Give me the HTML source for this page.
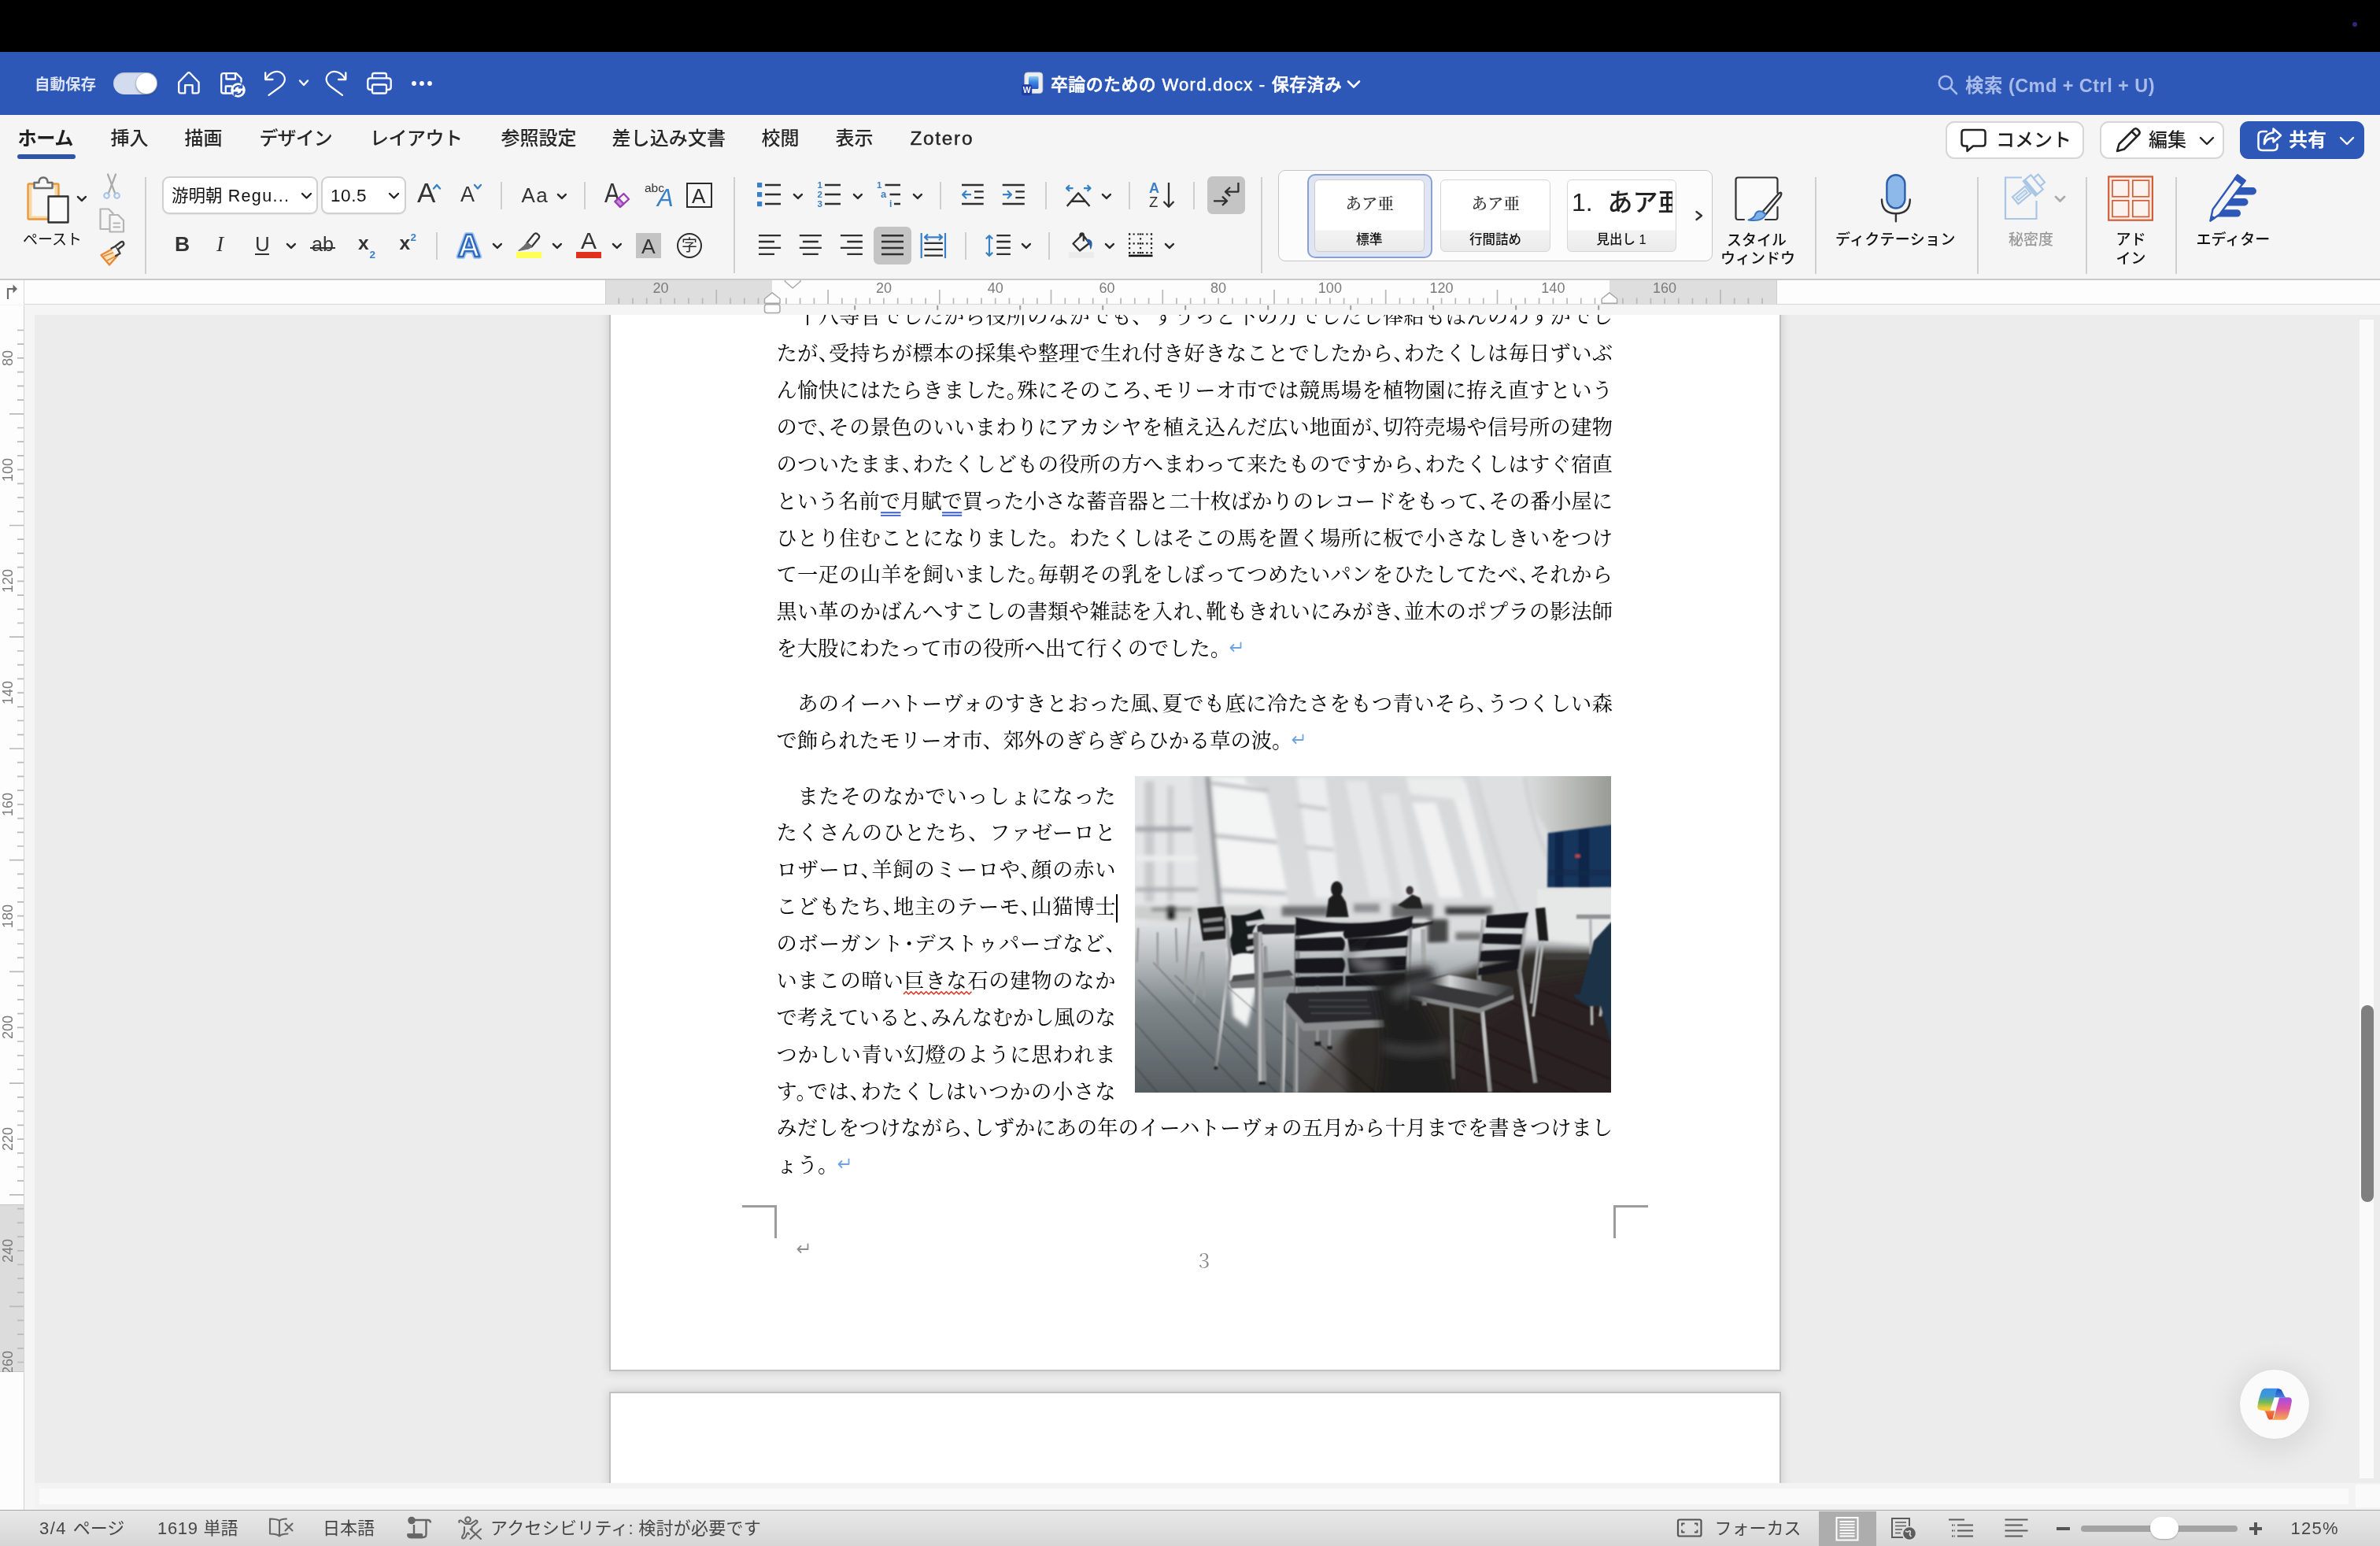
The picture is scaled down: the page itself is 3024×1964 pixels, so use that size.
<!DOCTYPE html>
<html lang="ja">
<head>
<meta charset="utf-8">
<title>卒論のための Word.docx</title>
<style>
*{box-sizing:border-box;margin:0;padding:0}
html{width:3024px;height:1964px;overflow:hidden;background:#ececec}
body{width:3024px;height:1964px;overflow:hidden;background:transparent;will-change:transform}
body{position:relative;font-family:"Liberation Sans","Noto Sans CJK JP",sans-serif;color:#222;-webkit-font-smoothing:antialiased}
.abs{position:absolute}
svg{position:absolute;overflow:visible}
.t{position:absolute;white-space:nowrap;line-height:1;}
/* top */
#menubar{left:0;top:0;width:3024px;height:66px;background:#000}
#titlebar{left:0;top:66px;width:3024px;height:80px;background:#2d58b8}
#ribbon{left:0;top:146px;width:3024px;height:209px;background:#f5f5f5}
#ribbonline{left:0;top:354px;width:3024px;height:2px;background:#c9c9c9}
.tab{position:absolute;top:164.300px;font-size:24px;font-weight:500;color:#262626;white-space:nowrap;line-height:1;letter-spacing:0}
.sep{position:absolute;width:2px;background:#cfcfcf}
.chev{position:absolute}
.lbl{position:absolute;font-size:19px;color:#1a1a1a;white-space:nowrap;line-height:1;text-align:center}
.rl{font-size:18px;color:#7a7a7a;line-height:18px}
/* doc */
#docbg{left:0;top:356px;width:3024px;height:1562px;background:#ececec}
.page{position:absolute;background:#fff}
.ln{position:absolute;left:986.500px;width:1062.500px;height:46.875px;line-height:46.875px;font-family:"Noto Serif CJK JP","Noto Serif CJK SC",serif;font-size:26.25px;color:#000;white-space:nowrap;text-align:justify;text-align-last:justify;text-justify:inter-character;font-weight:400}
.ln.nj{text-align:left;text-align-last:left}
.ln.c{width:431px}
.ln i{font-style:normal;margin-right:-.5em}
.ln i.m{margin-left:-.25em;margin-right:-.25em}
.pm{color:#6ea0dc;font-family:"DejaVu Sans",sans-serif;font-size:20px;margin-left:6px}
/* status */
#status{left:0;top:1918px;width:3024px;height:46px;background:linear-gradient(#e8e8e8,#d6d6d6);border-top:1.500px solid #a6a6a6}
.st{position:absolute;top:1931px;font-size:22px;color:#464646;white-space:nowrap;line-height:1}
</style>
</head>
<body>
<div class="abs" id="menubar"></div>
<div class="abs" style="left:2989px;top:28px;width:6px;height:6px;border-radius:3px;background:#2a2a78"></div>
<!-- document area -->
<div class="abs" id="docbg"></div>
<div class="page" style="left:776px;top:300px;width:1484.500px;height:1440px;box-shadow:0 0 0 2px #c1c1c1,0 0 11px 3px rgba(0,0,0,.13)"></div>
<div class="page" style="left:776px;top:1770px;width:1484.500px;height:300px;box-shadow:0 0 0 2px #c1c1c1,0 0 11px 3px rgba(0,0,0,.13)"></div>
<div class="ln " style="top:377.29px">　十八等官でしたから役所のなかでも、ずうっと下の方でしたし俸給もほんのわずかでし</div>
<div class="ln " style="top:424.16px">たが<i>、</i>受持ちが標本の採集や整理で生れ付き好きなことでしたから<i>、</i>わたくしは毎日ずいぶ</div>
<div class="ln " style="top:471.04px">ん愉快にはたらきました<i>。</i>殊にそのころ<i>、</i>モリーオ市では競馬場を植物園に拵え直すという</div>
<div class="ln " style="top:517.91px">ので<i>、</i>その景色のいいまわりにアカシヤを植え込んだ広い地面が<i>、</i>切符売場や信号所の建物</div>
<div class="ln " style="top:564.79px">のついたまま<i>、</i>わたくしどもの役所の方へまわって来たものですから<i>、</i>わたくしはすぐ宿直</div>
<div class="ln " style="top:611.66px;letter-spacing:-.12px">という名前で月賦で買った小さな蓄音器と二十枚ばかりのレコードをもって<i>、</i>その番小屋に</div>
<div class="ln " style="top:658.54px">ひとり住むことになりました。わたくしはそこの馬を置く場所に板で小さなしきいをつけ</div>
<div class="ln " style="top:705.41px">て一疋の山羊を飼いました<i>。</i>毎朝その乳をしぼってつめたいパンをひたしてたべ<i>、</i>それから</div>
<div class="ln " style="top:752.29px">黒い革のかばんへすこしの書類や雑誌を入れ<i>、</i>靴もきれいにみがき<i>、</i>並木のポプラの影法師</div>
<div class="ln nj" style="top:799.16px">を大股にわたって市の役所へ出て行くのでした。</div>
<div class="ln " style="top:869.44px">　あのイーハトーヴォのすきとおった風<i>、</i>夏でも底に冷たさをもつ青いそら<i>、</i>うつくしい森</div>
<div class="ln nj" style="top:916.31px">で飾られたモリーオ市、郊外のぎらぎらひかる草の波。</div>
<div class="ln c" style="top:986.59px">　またそのなかでいっしょになった</div>
<div class="ln c" style="top:1033.46px">たくさんのひとたち、ファゼーロと</div>
<div class="ln c" style="top:1080.34px">ロザーロ<i>、</i>羊飼のミーロや<i>、</i>顔の赤い</div>
<div class="ln c" style="top:1127.21px">こどもたち<i>、</i>地主のテーモ<i>、</i>山猫博士</div>
<div class="ln c" style="top:1174.09px">のボーガント<i class="m">・</i>デストゥパーゴなど<i>、</i></div>
<div class="ln c" style="top:1220.96px">いまこの暗い巨きな石の建物のなか</div>
<div class="ln c" style="top:1267.84px;letter-spacing:-.3px">で考えていると<i>、</i>みんなむかし風のな</div>
<div class="ln c" style="top:1314.71px">つかしい青い幻燈のように思われま</div>
<div class="ln c" style="top:1361.59px">す<i>。</i>では<i>、</i>わたくしはいつかの小さな</div>
<div class="ln " style="top:1408.46px;letter-spacing:-.12px">みだしをつけながら<i>、</i>しずかにあの年のイーハトーヴォの五月から十月までを書きつけまし</div>
<div class="ln nj" style="top:1455.34px">ょう。</div>
<svg width="18" height="14" style="left:1561px;top:814.6px" viewBox="0 0 18 14" fill="none" stroke="#6fa3e0" stroke-width="1.800" stroke-linecap="round" stroke-linejoin="round"><path d="M15.500 1.500 V8 H2.500 M6.500 4 L2.500 8 L6.500 12"/></svg>
<svg width="18" height="14" style="left:1640px;top:931.8px" viewBox="0 0 18 14" fill="none" stroke="#6fa3e0" stroke-width="1.800" stroke-linecap="round" stroke-linejoin="round"><path d="M15.500 1.500 V8 H2.500 M6.500 4 L2.500 8 L6.500 12"/></svg>
<svg width="18" height="14" style="left:1063px;top:1470.8px" viewBox="0 0 18 14" fill="none" stroke="#6fa3e0" stroke-width="1.800" stroke-linecap="round" stroke-linejoin="round"><path d="M15.500 1.500 V8 H2.500 M6.500 4 L2.500 8 L6.500 12"/></svg>
<svg width="18" height="14" style="left:1011px;top:1578.5px" viewBox="0 0 18 14" fill="none" stroke="#8e8e8e" stroke-width="1.800" stroke-linecap="round" stroke-linejoin="round"><path d="M15.500 1.500 V8 H2.500 M6.500 4 L2.500 8 L6.500 12"/></svg>
<svg width="25.5" height="8" style="left:1119px;top:649px" viewBox="0 0 25.5 8" fill="none" stroke="#3a5fc6" stroke-width="1.850"><path d="M0 2.250 H25.5 M0 5.800 H25.5"/></svg>
<svg width="25.2" height="8" style="left:1197.3px;top:649px" viewBox="0 0 25.2 8" fill="none" stroke="#3a5fc6" stroke-width="1.850"><path d="M0 2.250 H25.2 M0 5.800 H25.2"/></svg>
<svg width="100" height="10" style="left:1140px;top:1255px" viewBox="1140 1255 100 10" fill="none" stroke="#e0301e" stroke-width="1.500" stroke-linejoin="round"><path d="M1148.0 1263L1151.2 1259.8L1154.4 1263.0L1157.6 1259.8L1160.8 1263.0L1164.0 1259.8L1167.2 1263.0L1170.4 1259.8L1173.6 1263.0L1176.8 1259.8L1180.0 1263.0L1183.2 1259.8L1186.4 1263.0L1189.6 1259.8L1192.8 1263.0L1196.0 1259.8L1199.2 1263.0L1202.4 1259.8L1205.6 1263.0L1208.8 1259.8L1212.0 1263.0L1215.2 1259.8L1218.4 1263.0L1221.6 1259.8L1224.8 1263.0L1228.0 1259.8L1231.2 1263.0L1234.4 1259.8"/></svg>
<div class="abs" style="left:1417.500px;top:1136px;width:2px;height:36px;background:#000"></div>
<div class="abs" style="left:942.500px;top:1530.500px;width:44.500px;height:42.500px;border-top:3px solid #9c9c9c;border-right:3px solid #9c9c9c"></div>
<div class="abs" style="left:2050px;top:1530.500px;width:44px;height:42.500px;border-top:3px solid #9c9c9c;border-left:3px solid #9c9c9c"></div>
<div class="t" id="pageno" style="left:1500px;top:1585px;width:60px;text-align:center;font-family:'Noto Serif CJK JP','Noto Serif CJK SC',serif;font-size:26.250px;color:#8a8a8a;line-height:30px">3</div>
<svg width="604.300" height="402.100" style="left:1442.300px;top:986.100px;overflow:hidden" viewBox="45 37 2203 1466" preserveAspectRatio="none">
<defs>
<linearGradient id="pfl" x1="0" y1="0" x2="1" y2="0"><stop offset="0" stop-color="#8d8b8a"/><stop offset=".22" stop-color="#6a6665"/><stop offset=".42" stop-color="#3a3432"/><stop offset="1" stop-color="#2a2422"/></linearGradient>
<linearGradient id="pft" x1="0" y1="0" x2="0" y2="1"><stop offset="0" stop-color="#e2e3e3"/><stop offset=".25" stop-color="#b9b9b9" stop-opacity=".75"/><stop offset=".55" stop-color="#777" stop-opacity="0"/></linearGradient>
<linearGradient id="pfv" x1="0" y1="700" x2="0" y2="1503" gradientUnits="userSpaceOnUse"><stop offset="0" stop-color="#e3e6e7"/><stop offset=".22" stop-color="#b9bec1"/><stop offset=".5" stop-color="#7f868a"/><stop offset="1" stop-color="#565c60"/></linearGradient>
<linearGradient id="pseat" x1="0" y1="0" x2="1" y2="0"><stop offset="0" stop-color="#2c2d2e"/><stop offset=".3" stop-color="#d4d5d6"/><stop offset=".55" stop-color="#8a8c8d"/><stop offset="1" stop-color="#333536"/></linearGradient>
<linearGradient id="pwall" x1="0" y1="0" x2="1" y2="0"><stop offset="0" stop-color="#8c8e88" stop-opacity="0"/><stop offset="1" stop-color="#868880" stop-opacity=".95"/></linearGradient>
<linearGradient id="pbg" x1="0" y1="0" x2="0" y2="1"><stop offset="0" stop-color="#d6d8d9"/><stop offset="1" stop-color="#dfe0e1"/></linearGradient>
<linearGradient id="psil" x1="0" y1="0" x2="1" y2="0"><stop offset="0" stop-color="#7d7f80"/><stop offset=".5" stop-color="#c9cacb"/><stop offset="1" stop-color="#8a8c8d"/></linearGradient>
<filter id="pb1" x="-5%" y="-5%" width="110%" height="110%"><feGaussianBlur stdDeviation="3.500"/></filter>
<filter id="pb2" x="-20%" y="-20%" width="140%" height="140%"><feGaussianBlur stdDeviation="9"/></filter>
<filter id="pb3" x="-30%" y="-30%" width="160%" height="160%"><feGaussianBlur stdDeviation="22"/></filter>
</defs>
<rect x="45" y="37" width="2203" height="1466" fill="url(#pbg)"/>
<g filter="url(#pb2)">
<!-- left window with trees -->
<polygon points="-30,-20 300,-20 340,640 -30,640" fill="#e4e5e6"/>
<rect x="90" y="60" width="45" height="560" fill="#bfc1c2" opacity=".7"/><rect x="195" y="80" width="30" height="540" fill="#c4c5c6" opacity=".7"/>
<rect x="45" y="270" width="265" height="24" fill="#a1a6a8"/><rect x="45" y="405" width="290" height="26" fill="#eceded"/><rect x="45" y="553" width="290" height="18" fill="#a6aaac"/>
<!-- window 1 -->
<polygon points="398,40 555,40 560,70 650,95 705,335 420,305" fill="#f3f4f4"/>
<polygon points="420,322 705,350 748,565 448,548" fill="#f4f4f4"/>
<polygon points="450,578 748,590 755,640 455,640" fill="#ededee"/>
<polygon points="372,37 392,37 448,640 428,640" fill="#8b8f91"/>
<polygon points="400,62 660,98 662,112 402,76" fill="#a9adaf"/><polygon points="420,305 700,335 702,350 422,320" fill="#a9adaf"/><polygon points="445,560 745,575 745,588 447,574" fill="#b1b4b6"/>
<!-- windows 2.. -->
<polygon points="795,40 925,40 965,330 1000,600 880,600 835,330" fill="#ecedee"/>
<polygon points="800,165 935,185 937,198 802,178" fill="#b5b8ba"/><polygon points="835,360 965,372 966,384 837,372" fill="#b5b8ba"/>
<polygon points="1020,60 1120,60 1235,600 1135,600" fill="#e6e7e8"/>
<polygon points="1185,120 1265,120 1370,600 1290,600" fill="#e4e5e6"/>
<polygon points="1330,160 1440,160 1565,600 1455,600" fill="#f1f1f2"/>
<polygon points="1500,60 1575,60 1715,600 1655,600" fill="#efeff0"/>
<polygon points="1300,40 1560,40 1575,150 1320,120" fill="#ebecec"/>
<!-- right wall -->
<polygon points="1610,-20 2330,-20 2330,640 1880,820" fill="#dedfe0"/>
<polygon points="1840,-20 2330,-20 2330,270 1965,305 1900,200" fill="url(#pwall)"/>
<path d="M1850 37 Q1880 250 1960 420" stroke="#b9bbbd" stroke-width="7" fill="none"/>
<path d="M1630 37 Q1700 400 1860 760" stroke="#c6c8c9" stroke-width="6" fill="none"/>
</g>
<!-- bg furniture band -->
<g filter="url(#pb2)" fill="#4a4c4d">
<rect x="45" y="640" width="600" height="60" fill="#c9cacb" opacity=".8"/>
<rect x="190" y="638" width="45" height="62" fill="#222"/><rect x="120" y="648" width="190" height="12" fill="#555"/>
<rect x="725" y="640" width="215" height="46" opacity=".75"/><rect x="1060" y="628" width="120" height="40" opacity=".5"/>
<rect x="1235" y="632" width="190" height="62" opacity=".8"/><rect x="1480" y="640" width="220" height="40" opacity=".8"/>
<rect x="1490" y="655" width="180" height="18" fill="#1d1d1d"/>
<rect x="1400" y="700" width="95" height="120" fill="#2c2c2c" opacity=".85"/>
<rect x="1530" y="760" width="120" height="40" fill="#777"/>
</g>
<!-- people -->
<g filter="url(#pb1)" fill="#1b1b1c">
<ellipse cx="980" cy="560" rx="27" ry="36"/><polygon points="930,690 942,605 965,585 1000,585 1022,620 1035,690"/>
<ellipse cx="1318" cy="566" rx="17" ry="20" fill="#3a3634"/><polygon points="1262,635 1310,600 1330,585 1365,600 1378,650 1300,650" fill="#202022"/>
</g>
<!-- screen + counter -->
<g filter="url(#pb1)">
<polygon points="1958,300 2300,256 2300,552 1955,552" fill="#17355c"/>
<polygon points="1990,300 2030,295 2030,552 1990,552" fill="#0f2444" opacity=".8"/><polygon points="2100,285 2150,278 2150,552 2100,552" fill="#0f2444" opacity=".8"/><rect x="1960" y="470" width="288" height="30" fill="#122b4d" opacity=".7"/>
<rect x="2085" y="400" width="22" height="14" fill="#c24a4a"/>
<polygon points="1908,562 2300,556 2300,852 1912,852" fill="#e6e7e7"/>
<rect x="1950" y="845" width="215" height="22" fill="#4b4b4b"/>
</g>
<!-- floor -->
<polygon points="-40,690 640,770 1400,810 1880,790 2330,850 2330,1600 -40,1600" fill="url(#pfv)" filter="url(#pb2)"/>
<polygon points="780,1600 1000,1250 1180,1080 1450,985 1870,838 2330,850 2330,1600" fill="#2b2624" opacity=".96" filter="url(#pb3)"/>
<polygon points="1480,1600 1600,1200 1900,1000 2330,940 2330,1600" fill="#2a2422" filter="url(#pb3)"/>
<polygon points="470,800 615,800 612,1000 565,1200 500,1150" fill="#f0f2f2" filter="url(#pb2)"/>
<polygon points="790,1180 1000,1160 1040,1600 800,1600" fill="#6d6b69" opacity=".55" filter="url(#pb3)"/>
<g stroke="#23282b" stroke-width="4" opacity=".5" filter="url(#pb1)"><path d="M45 1180 L330 1503 M60 980 L560 1503 M230 960 L800 1503 M470 1010 L1040 1503 M130 900 L700 1503 M45 1380 L150 1503"/></g>
<g stroke="#15110f" stroke-width="4" opacity=".6" filter="url(#pb1)"><path d="M900 1280 L1160 1503 M1560 1150 L2248 1440 M1500 1250 L2100 1503 M1700 1050 L2248 1270 M1430 1330 L1830 1503 M1850 1000 L2248 1150"/></g>
<!-- far-left chairs -->
<g filter="url(#pb1)">
<g stroke="#9a9c9d" stroke-width="9" fill="none"><path d="M60 740 L55 900 M150 760 L150 930 M235 740 L240 900 M300 690 L275 1025 M355 850 L318 1090 M362 850 L365 1060"/></g>
<path d="M335 650 L455 640 L470 700 L465 790 L360 800 Z" fill="#1d1e1f"/>
<path d="M360 700 L450 690 L452 706 L362 716 Z M362 742 L455 734 L456 750 L364 758 Z" fill="#8d8f90"/>
<polygon points="300,815 480,800 480,830 300,850" fill="#c6c7c8"/>
<!-- left chair -->
<path d="M490 680 Q560 690 625 652 L645 700 Q600 720 590 760 Q600 800 640 815 L590 860 Q530 850 500 870 L480 800 Q500 770 495 740 Z" fill="#191a1b"/>
<path d="M560 712 L640 700 L642 716 L566 730 Z M568 772 L600 768 L604 784 L570 790 Z M560 830 L600 822 L603 836 L565 846 Z" fill="#cfd0d1"/>
<g stroke="url(#psil)" stroke-width="15" fill="none" stroke-linecap="round"><path d="M470 700 L485 880 L420 1385"/><path d="M650 830 L655 990"/></g>
<polygon points="480,985 760,958 790,990 790,1010 490,1020" fill="#77797a"/>
<polygon points="500,960 760,935 780,960 490,990" fill="#4a4c4d"/>
<circle cx="420" cy="1388" r="9" fill="#222"/>
<!-- table -->
<polygon points="612,730 700,702 1425,706 1425,722 1330,745 640,770 612,758" fill="#2b2c2d"/>
<polygon points="640,722 705,700 1425,704 1380,716 900,725" fill="#d5d6d7"/>
<path d="M613 760 L635 1460" stroke="url(#psil)" stroke-width="40" fill="none"/>
<rect x="618" y="1450" width="34" height="16" fill="#1a1a1a"/>
<path d="M1380 745 L1385 1100" stroke="#a9abac" stroke-width="22" fill="none"/>
<!-- main chair -->
<g stroke="url(#psil)" stroke-width="24" fill="none"><path d="M797 720 L790 1503"/><path d="M1318 715 L1302 1120"/></g>
<path d="M745 1075 L727 1503" stroke="url(#psil)" stroke-width="20" fill="none"/>
<path d="M892 960 L890 1280 M948 1210 L945 1300" stroke="#8f9192" stroke-width="14" fill="none"/>
<rect x="878" y="1265" width="28" height="20" fill="#1a1a1a"/><rect x="935" y="1285" width="24" height="18" fill="#1a1a1a"/>
<path d="M788 690 Q1060 745 1333 684 L1330 735 Q1300 760 1200 775 L1020 790 Q1000 765 1020 750 L788 778 Z" fill="#18191a"/>
<path d="M786 790 L1000 782 Q1030 800 1010 845 L786 848 Z M1030 790 L1312 775 L1308 830 L1040 850 Z" fill="#18191a"/>
<path d="M786 882 L1005 878 Q1030 900 1008 948 L786 950 Z M1030 880 L1305 870 L1300 935 L1040 950 Z" fill="#18191a"/>
<path d="M786 968 L1010 962 L1010 1008 L786 1012 Z M1020 962 L1298 950 L1294 1005 L1020 1010 Z" fill="#18191a"/>
<polygon points="760,1042 1195,1028 1215,1150 1080,1180 830,1182 742,1082" fill="#2a2c2d"/>
<polygon points="742,1082 830,1182 1200,1165 1205,1200 825,1218 738,1105" fill="#8a8c8d"/>
<g stroke="#4a4c4d" stroke-width="5"><path d="M850 1075 H1120 M850 1105 H1130 M860 1135 H1140"/></g>
<!-- right chair -->
<g stroke="url(#psil)" stroke-width="20" fill="none"><path d="M1660 700 L1638 965 L1690 1500"/><path d="M1858 690 L1826 935 L1900 1458"/></g>
<polygon points="1675,682 1868,668 1852,742 1668,738" fill="#17181a"/><polygon points="1655,765 1842,768 1836,818 1650,812" fill="#17181a"/>
<polygon points="1646,846 1832,838 1826,892 1640,897" fill="#17181a"/><polygon points="1636,925 1826,888 1820,932 1632,962" fill="#17181a"/>
<polygon points="1320,992 1500,955 1795,1012 1800,1050 1640,1112 1322,1050" fill="#37393a"/>
<polygon points="1380,990 1500,958 1795,1012 1720,1055" fill="url(#pseat)"/>
<polygon points="1322,1050 1640,1112 1800,1050 1800,1070 1640,1135 1322,1072" fill="#858788"/>
<path d="M1510 1100 L1520 1440" stroke="#8a8c8d" stroke-width="18" fill="none"/>
<!-- far right -->
<path d="M1900 650 L1945 645 L1960 800 L1915 800 Z" fill="#1c1d1e"/>
<g stroke="#b4b6b7" stroke-width="13" fill="none"><path d="M1935 800 L1890 1150"/><path d="M1915 800 L1880 1090"/><path d="M2155 700 L2162 1190"/><path d="M2225 960 L2200 1150"/></g>
<rect x="2090" y="678" width="158" height="20" fill="#8f9192"/>
<rect x="1945" y="860" width="210" height="28" fill="#3c3c3c"/>
<polygon points="2300,700 2248,715 2170,800 2105,1050 2075,1045 2085,1065 2150,1105 2200,1100 2248,1265 2300,1300" fill="#1e3346"/>
</g>
<!-- blurred foreground chair -->
<g filter="url(#pb3)">
<path d="M1180 760 Q1020 850 1050 915 Q1080 960 1420 915 L1440 1000 L1330 1030 Q1480 1200 1540 1600 L1150 1600 Q1230 1300 1150 1000 Q1020 960 1030 880 Q1050 800 1180 760 Z" fill="#1d1d1f" opacity=".93"/>
<path d="M1060 870 Q1100 930 1200 900" stroke="#cfd0d1" stroke-width="26" fill="none" opacity=".8"/>
<path d="M1250 1060 Q1300 1010 1420 1000" stroke="#9d9fa0" stroke-width="22" fill="none" opacity=".6"/>
<path d="M1200 1290 Q1330 1330 1500 1290" stroke="#77797a" stroke-width="24" fill="none" opacity=".5"/>
</g>
</svg>

<div class="abs" style="left:44px;top:1883.500px;width:2980px;height:35px;background:#f3f3f3"></div>
<div class="abs" style="left:50px;top:1891px;width:2934px;height:19.500px;background:#fafafa"></div>
<div class="abs" style="left:2997.500px;top:406px;width:18.500px;height:1472px;background:#fafafa"></div>
<div class="abs" style="left:3000px;top:1276.500px;width:16px;height:250.500px;border-radius:8px;background:#7f7f7f"></div>
<div class="abs" style="left:2992.500px;top:1886px;width:31.500px;height:28.500px;background:#fafafa"></div>
<div class="abs" style="left:2846px;top:1740px;width:88px;height:88px;border-radius:44px;background:#fbfbfb;box-shadow:0 6px 36px 10px rgba(0,0,0,.085),0 0 0 1px rgba(0,0,0,.02)"></div>
<svg width="48" height="44" style="left:2866px;top:1762px" viewBox="547 500 571 523">
<defs>
<linearGradient id="cp1" x1="0" y1="0" x2="0" y2="1"><stop offset="0" stop-color="#3a8fec"/><stop offset=".35" stop-color="#3f9bd0"/><stop offset=".62" stop-color="#74b957"/><stop offset=".9" stop-color="#f2cb3a"/><stop offset="1" stop-color="#f5c13a"/></linearGradient>
<linearGradient id="cp2" x1="0" y1="0" x2="0" y2="1"><stop offset="0" stop-color="#1d4cc0"/><stop offset="1" stop-color="#3f86dc"/></linearGradient>
<linearGradient id="cp3" x1="0" y1="0" x2="0" y2="1"><stop offset="0" stop-color="#9f50e0"/><stop offset=".18" stop-color="#b94fd0"/><stop offset=".5" stop-color="#e2569a"/><stop offset=".8" stop-color="#f08a66"/><stop offset="1" stop-color="#f7a552"/></linearGradient>
<linearGradient id="cp4" x1="0" y1="0" x2="0" y2="1"><stop offset="0" stop-color="#f07a3c"/><stop offset="1" stop-color="#e2532f"/></linearGradient>
</defs>
<path d="M858 525 Q900 515 935 540 Q960 580 985 640 Q995 655 1010 657 L830 657 Z" fill="url(#cp2)"/>
<path d="M690 522 H900 Q870 525 850 590 L765 858 H700 Q560 860 575 790 Q590 690 625 590 Q645 525 690 522 Z" fill="url(#cp1)"/>
<path d="M700 860 H835 L805 985 Q780 1000 750 992 Q725 975 715 930 Q708 890 680 862 Z" fill="url(#cp4)"/>
<path d="M905 657 H1040 Q1100 655 1092 720 Q1075 830 1045 920 Q1025 990 985 995 H790 Q815 990 830 935 L905 657 Z" fill="url(#cp3)"/>
</svg>

<div class="abs" id="titlebar"></div>
<div class="t" id="autosave" style="left:44px;top:97.500px;font-size:19.5px;font-weight:700;color:#dbe3f5">自動保存</div>
<div class="abs" style="left:144px;top:92px;width:56px;height:28px;border-radius:14px;background:#d3dbee;box-shadow:inset 0 1px 2px rgba(0,0,0,.15)"></div>
<div class="abs" style="left:173px;top:93px;width:26px;height:26px;border-radius:13px;background:#fff;box-shadow:0 1px 3px rgba(0,0,0,.45)"></div>
<svg width="340" height="50" style="left:220px;top:82px" viewBox="220 82 340 50" fill="none" stroke="#fff" stroke-width="2.300" stroke-linecap="round" stroke-linejoin="round">
<!-- home -->
<path d="M227.2 104.5 L238.3 93 Q239.9 91.4 241.5 93 L252.6 104.5 V116 Q252.6 118.3 250.3 118.3 H244.6 V108.2 H235.2 V118.3 H229.5 Q227.2 118.3 227.2 116 Z"/>
<!-- save -->
<path d="M294 118.5 H284 Q281.2 118.5 281.2 115.7 V96 Q281.2 93.2 284 93.2 H300 L306.5 99.5 V104"/>
<path d="M287.5 93.5 V100.5 H299 V93.5"/>
<path d="M286.8 118 V109.5 H294"/>
<circle cx="302.5" cy="114.5" r="9.3" fill="#fff" stroke="none"/>
<path d="M297.6 113 A5.2 5.2 0 0 1 306.6 111 M307.4 116 A5.2 5.2 0 0 1 298.4 118" stroke="#2d58b8" stroke-width="2.2"/>
<path d="M307.3 108 V111.6 H303.7 M297.7 121 V117.4 H301.3" stroke="#2d58b8" stroke-width="2"/>
<!-- undo -->
<path d="M337.2 92.5 V101 H346.5"/>
<path d="M338 100.2 C343 91 353 88.5 358.5 93.5 C364.5 99 362 106 355 111 L341.5 120.8" stroke-width="2.200"/>
<path d="M381 102.5 L386 108 L391 102.5" stroke-width="2.4"/>
<!-- redo -->
<path d="M439.3 92.5 V101 H430"/>
<path d="M438.5 100.2 C433.5 91 423.5 88.5 418 93.5 C412 99 414.500 106 421.5 111 L435 120.8" stroke-width="2.200"/>
<!-- print -->
<path d="M473 99 V95.5 Q473 93 475.5 93 H488.500 Q491 93 491 95.5 V99"/>
<path d="M473 114 H470.5 Q467.3 114 467.3 110.800 V102.500 Q467.3 99.300 470.5 99.300 H493.500 Q496.700 99.300 496.700 102.500 V110.800 Q496.700 114 493.500 114 H491"/>
<rect x="473" y="107.500" width="18" height="11" rx="2"/>
<!-- dots -->
<g fill="#fff" stroke="none"><circle cx="526" cy="106" r="2.900"/><circle cx="536" cy="106" r="2.900"/><circle cx="546" cy="106" r="2.900"/></g>
</svg>
<!-- doc icon -->
<svg width="32" height="34" style="left:1296px;top:90px" viewBox="0 0 32 34">
<defs><linearGradient id="wg" x1="0" y1="0" x2="0" y2="1"><stop offset="0" stop-color="#86cdf8"/><stop offset=".45" stop-color="#3f86e2"/><stop offset="1" stop-color="#1f55c2"/></linearGradient></defs>
<rect x="5.800" y="2" width="23" height="26.500" rx="4" fill="#ededed" stroke="#c4c8d0" stroke-width=".8"/>
<rect x="11" y="7" width="12.500" height="16" rx="1.500" fill="url(#wg)"/>
<rect x="2" y="17.300" width="13.200" height="14" rx="3.200" fill="#1c3ea6"/>
<text x="8.600" y="28.300" font-size="10.500" font-weight="700" fill="#fff" text-anchor="middle" font-family="Liberation Sans,sans-serif">W</text>
</svg>
<div class="t" id="title" style="left:1335px;top:97px;font-size:22px;font-weight:500;color:#fff;letter-spacing:.35px;-webkit-text-stroke:.55px #fff">卒論のための<span style="letter-spacing:1.250px"> Word.docx - </span>保存済み</div>
<svg width="20" height="14" style="left:1710px;top:100px" viewBox="0 0 20 14" fill="none" stroke="#fff" stroke-width="2.6" stroke-linecap="round" stroke-linejoin="round"><path d="M3 3.500 L10 10.500 L17 3.500"/></svg>
<!-- search -->
<svg width="30" height="30" style="left:2460px;top:93px" viewBox="0 0 30 30" fill="none" stroke="#a9bbe8" stroke-width="2.600" stroke-linecap="round"><circle cx="12" cy="12" r="8.200"/><path d="M18.200 18.200 L26 26"/></svg>
<div class="t" id="search" style="left:2497px;top:97.500px;font-size:23.500px;font-weight:700;color:#a9bbe8;letter-spacing:.45px">検索 (Cmd + Ctrl + U)</div>
<div class="abs" id="ribbon"></div>
<div class="abs" id="ribbonline"></div>
<!-- tabs -->
<div class="tab" id="tab0" style="left:22.500px;font-size:24.200px;letter-spacing:-.4px;font-weight:700;color:#1f1f1f">ホーム</div>
<div class="abs" style="left:22px;top:196px;width:74px;height:6px;border-radius:3px;background:#2f55a4"></div>
<div class="tab" id="tab1" style="left:140.500px">挿入</div>
<div class="tab" id="tab2" style="left:234.500px">描画</div>
<div class="tab" id="tab3" style="left:329.500px;letter-spacing:-.9px">デザイン</div>
<div class="tab" id="tab4" style="left:470px;letter-spacing:-.5px">レイアウト</div>
<div class="tab" id="tab5" style="left:636.500px;letter-spacing:0">参照設定</div>
<div class="tab" id="tab6" style="left:777.500px;letter-spacing:.1px">差し込み文書</div>
<div class="tab" id="tab7" style="left:967.500px">校閲</div>
<div class="tab" id="tab8" style="left:1061.500px">表示</div>
<div class="tab" id="tab9" style="left:1156.500px;font-size:24.300px;letter-spacing:1.750px;-webkit-text-stroke:.45px #262626">Zotero</div>
<!-- right buttons -->
<div class="abs" style="left:2472px;top:154px;width:176px;height:48px;border-radius:11px;background:#fff;border:2px solid #d6d6d6"></div>
<svg width="36" height="36" style="left:2490px;top:161px" viewBox="0 0 36 36" fill="none" stroke="#222" stroke-width="2.5" stroke-linejoin="round"><path d="M6 4 H29 Q32.500 4 32.500 7.500 V21 Q32.500 24.500 29 24.500 H17 L9.500 31 V24.500 H6 Q2.500 24.500 2.500 21 V7.500 Q2.500 4 6 4 Z"/></svg>
<div class="t" id="btn_comment" style="left:2536px;top:166px;font-size:24px;font-weight:500;color:#1f1f1f">コメント</div>
<div class="abs" style="left:2668px;top:154px;width:158px;height:48px;border-radius:11px;background:#fff;border:2px solid #d6d6d6"></div>
<svg width="36" height="36" style="left:2686px;top:160px" viewBox="0 0 36 36" fill="none" stroke="#222" stroke-width="2.500" stroke-linejoin="round" stroke-linecap="round"><path d="M4 32 L6.500 23 L25 4.500 Q27.500 2 30 4.500 L31.500 6 Q34 8.500 31.500 11 L13 29.500 Z M22.500 7 L29 13.500"/></svg>
<div class="t" id="btn_edit" style="left:2730px;top:166px;font-size:24px;font-weight:500;color:#1f1f1f">編集</div>
<svg width="22" height="14" style="left:2793px;top:172px" viewBox="0 0 22 14" fill="none" stroke="#222" stroke-width="2.4" stroke-linecap="round" stroke-linejoin="round"><path d="M3 3 L11 11 L19 3"/></svg>
<div class="abs" style="left:2846px;top:154px;width:158px;height:48px;border-radius:11px;background:#2d58b8"></div>
<svg width="36" height="36" style="left:2866px;top:160px" viewBox="0 0 36 36" fill="none" stroke="#fff" stroke-width="2.500" stroke-linejoin="round" stroke-linecap="round"><path d="M14 7 H8.500 Q3.500 7 3.500 12 V26 Q3.500 31 8.500 31 H22.500 Q27.500 31 27.500 26 V23.500"/><path d="M22.500 3.500 L32 12 L22.500 20.500 V15.500 Q13.500 15 11 23 Q10.500 9.500 22.500 8.500 Z"/></svg>
<div class="t" id="btn_share" style="left:2908px;top:166px;font-size:24px;font-weight:700;color:#fff">共有</div>
<svg width="22" height="14" style="left:2971px;top:172px" viewBox="0 0 22 14" fill="none" stroke="#fff" stroke-width="2.400" stroke-linecap="round" stroke-linejoin="round"><path d="M3 3 L11 11 L19 3"/></svg>
<!-- clipboard group -->
<svg width="140" height="130" style="left:20px;top:216px" viewBox="20 216 140 130" fill="none" stroke-linejoin="round" stroke-linecap="round">
<rect x="35.500" y="233.500" width="39" height="45" rx="1.500" fill="#f6d9a2" stroke="#e8963e" stroke-width="2.300"/>
<rect x="40.500" y="238.500" width="29" height="36" fill="#f7f7f7" stroke="none"/>
<path d="M43.500 239 V232 H49.500 Q49.500 225.500 55 225.500 Q60.500 225.500 60.500 232 H66.500 V239 Z" fill="#f7f7f7" stroke="#6b6b6b" stroke-width="2.400"/>
<rect x="61.500" y="249.500" width="25" height="33" fill="#fafafa" stroke="#2f2f2f" stroke-width="2.300"/>
<!-- scissors -->
<g stroke="#a9a9a9" stroke-width="2.200"><path d="M137 221.500 L146.500 246.500 M147 221.500 L137.500 246.500"/></g>
<g stroke="#a9c6e6" stroke-width="2.200"><circle cx="135.500" cy="248.500" r="3.300"/><circle cx="148.500" cy="248.500" r="3.300"/></g>
<!-- copy -->
<g stroke="#b4b4b4" stroke-width="2.200" fill="#f5f5f5"><path d="M127.500 265.500 H138 L143.500 271 V291 H127.500 Z"/><path d="M139.500 273 H150 L157 280 V294.500 H139.500 Z" fill="#f7f7f7"/><path d="M144.500 283.500 H152 M144.500 288.500 H152" /></g>
<!-- format painter -->
<path d="M128.500 324 L145 315 L149.500 324.500 L139 336.500 Z" fill="#fbe2b4" stroke="#e8883a" stroke-width="2.400"/>
<path d="M132 325.500 L143.500 321 M136 331 L146 326" stroke="#e8883a" stroke-width="1.600"/>
<path d="M141.500 315.500 L147.500 312.500 L152.500 322 L147 325" fill="#f5f5f5" stroke="#3a3a3a" stroke-width="2.400"/>
<path d="M147 312.500 L153.500 307.500 Q156 306 157 308.500 Q158 311 155.500 312.500 L150 316.500" fill="#f5f5f5" stroke="#3a3a3a" stroke-width="2.400"/>
</svg>
<svg width="15.8" height="11" style="left:96.1px;top:247px" viewBox="0 0 15.8 11" fill="none" stroke="#2b2b2b" stroke-width="2.5" stroke-linecap="round" stroke-linejoin="round"><path d="M3 3 L7.9 8 L12.8 3"/></svg>
<div class="lbl" id="lbl_paste" style="left:29px;top:295px;color:#111">ペースト</div>
<div class="sep" style="left:184px;top:224.5px;height:123.5px"></div>
<!-- font boxes -->
<div class="abs" style="left:206px;top:224px;width:198px;height:48px;border-radius:9px;background:#fff;border:2px solid #d0d0d0;box-shadow:0 1px 1px rgba(0,0,0,.06)"></div>
<div class="t" id="fontname" style="left:218px;top:238.500px;font-size:21.500px;color:#111">游明朝<span style="letter-spacing:1.300px"> Regu...</span></div>
<svg width="17" height="11.5" style="left:380.5px;top:243.25px" viewBox="0 0 17 11.5" fill="none" stroke="#222" stroke-width="2.400" stroke-linecap="round" stroke-linejoin="round"><path d="M3 3 L8.5 8.5 L14 3"/></svg>
<div class="abs" style="left:408px;top:224px;width:108px;height:48px;border-radius:9px;background:#fff;border:2px solid #d0d0d0;box-shadow:0 1px 1px rgba(0,0,0,.06)"></div>
<div class="t" id="fontsize" style="left:420px;top:238px;font-size:22.500px;color:#111;letter-spacing:.6px">10.5</div>
<svg width="17" height="11.5" style="left:491.5px;top:243.25px" viewBox="0 0 17 11.5" fill="none" stroke="#222" stroke-width="2.400" stroke-linecap="round" stroke-linejoin="round"><path d="M3 3 L8.5 8.5 L14 3"/></svg>
<!-- row1 font -->
<div class="t" id="growA" style="left:530px;top:226.500px;font-size:35px;color:#333;font-weight:400">A</div>
<svg width="14" height="10.5" style="left:548.2px;top:231.75px" viewBox="0 0 14 10.5" fill="none" stroke="#3a80c6" stroke-width="2.400" stroke-linecap="round" stroke-linejoin="round"><path d="M3 7.5 L7 3 L11 7.5"/></svg>
<div class="t" id="shrinkA" style="left:585px;top:234px;font-size:27px;color:#333">A</div>
<svg width="14" height="10.5" style="left:600px;top:231.75px" viewBox="0 0 14 10.5" fill="none" stroke="#3a80c6" stroke-width="2.400" stroke-linecap="round" stroke-linejoin="round"><path d="M3 3 L7 7.5 L11 3"/></svg>
<div class="sep" style="left:636px;top:230.5px;height:35px"></div>
<div class="t" id="Aa" style="left:662.500px;top:235px;font-size:26px;color:#333;letter-spacing:1.500px">Aa</div>
<svg width="15.8" height="11" style="left:706.1px;top:244px" viewBox="0 0 15.8 11" fill="none" stroke="#2b2b2b" stroke-width="2.5" stroke-linecap="round" stroke-linejoin="round"><path d="M3 3 L7.9 8 L12.8 3"/></svg>
<div class="sep" style="left:742px;top:230.5px;height:35px"></div>
<div class="t" id="clearA" style="left:768px;top:226.500px;font-size:35px;color:#333;transform:scaleX(.84);transform-origin:0 0">A</div>
<svg width="24" height="24" style="left:778px;top:242px" viewBox="778 242 24 24" fill="none" stroke="#9b3fb5" stroke-width="2.300" stroke-linejoin="round"><path d="M781.500 256 L792.500 246 L799 253 L788 263 Z" fill="#f5f5f5"/><path d="M781.500 256 L786 252 L792.500 259 L788 263 Z" fill="#c98ad8"/></svg>
<div class="t" id="abc" style="left:819px;top:231px;font-size:15.500px;color:#333">abc</div>
<div class="t" id="abcA" style="left:835px;top:236px;font-size:31px;color:#3a80c6;font-style:italic">A</div>
<div class="abs" style="left:872px;top:232px;width:32.500px;height:32px;border:2.600px solid #2b2b2b;background:#f7f7f7"></div>
<div class="t" id="boxA" style="left:879px;top:235.500px;font-size:26px;color:#2b2b2b">A</div>
<!-- row2 font -->
<div class="t" id="bB" style="left:222px;top:296.500px;font-size:26.500px;font-weight:700;color:#333">B</div>
<div class="t" id="bI" style="left:275px;top:296px;font-size:27.500px;font-style:italic;color:#333;font-family:'Liberation Serif',serif">I</div>
<div class="t" id="bU" style="left:324px;top:296.500px;font-size:26px;color:#333">U</div>
<div class="abs" style="left:324px;top:321.500px;width:18px;height:2.400px;background:#333"></div>
<svg width="15.8" height="11" style="left:362.1px;top:306.5px" viewBox="0 0 15.8 11" fill="none" stroke="#2b2b2b" stroke-width="2.5" stroke-linecap="round" stroke-linejoin="round"><path d="M3 3 L7.9 8 L12.8 3"/></svg>
<div class="t" id="bab" style="left:396px;top:298px;font-size:25px;color:#333">ab</div>
<div class="abs" style="left:394px;top:314px;width:32px;height:2.200px;background:#333"></div>
<div class="t" id="bxs" style="left:455px;top:296.500px;font-size:24.500px;font-weight:700;color:#333">x</div>
<div class="t" id="bxs2" style="left:469.500px;top:317px;font-size:13.500px;font-weight:700;color:#3a80c6">2</div>
<div class="t" id="bxp" style="left:507.500px;top:296.500px;font-size:24.500px;font-weight:700;color:#333">x</div>
<div class="t" id="bxp2" style="left:521.500px;top:294.500px;font-size:13.500px;font-weight:700;color:#3a80c6">2</div>
<div class="sep" style="left:554px;top:294.5px;height:35px"></div>
<svg width="44" height="44" style="left:574px;top:288px" viewBox="574 288 44 44"><text x="596" y="325.500" text-anchor="middle" font-family="Liberation Sans,sans-serif" font-weight="700" font-size="40" fill="#a9c8ee" stroke="#a9c8ee" stroke-width="6" stroke-linejoin="round">A</text><text x="596" y="325.500" text-anchor="middle" font-family="Liberation Sans,sans-serif" font-weight="700" font-size="40" fill="#fff" stroke="#2e6cc0" stroke-width="2.500" stroke-linejoin="round">A</text></svg>
<svg width="15.8" height="11" style="left:623.8px;top:306.5px" viewBox="0 0 15.8 11" fill="none" stroke="#2b2b2b" stroke-width="2.5" stroke-linecap="round" stroke-linejoin="round"><path d="M3 3 L7.9 8 L12.8 3"/></svg>
<svg width="40" height="40" style="left:652px;top:292px" viewBox="652 292 40 40" fill="none" stroke-linejoin="round" stroke-linecap="round"><rect x="656" y="320" width="32.200" height="8" fill="#ffff57"/><path d="M669.500 308.500 L678.500 297.500 Q680.500 295.500 682.500 297 L684.500 298.800 Q686 300.500 684.500 302.500 L675.500 313.500 Z" stroke="#333" stroke-width="2.200" fill="#f5f5f5"/><path d="M669.500 308.500 L675.500 313.500 L671.500 316 L659 318.500 L666 312.500 Z" fill="#6e6e6e" stroke="#6e6e6e" stroke-width="1.200"/></svg>
<svg width="15.8" height="11" style="left:700.1px;top:306.5px" viewBox="0 0 15.8 11" fill="none" stroke="#2b2b2b" stroke-width="2.5" stroke-linecap="round" stroke-linejoin="round"><path d="M3 3 L7.9 8 L12.8 3"/></svg>
<div class="t" id="fcA" style="left:738px;top:291px;font-size:30px;color:#333">A</div>
<div class="abs" style="left:732px;top:320px;width:32px;height:8px;background:#e0301e"></div>
<svg width="15.8" height="11" style="left:776.1px;top:306.5px" viewBox="0 0 15.8 11" fill="none" stroke="#2b2b2b" stroke-width="2.5" stroke-linecap="round" stroke-linejoin="round"><path d="M3 3 L7.9 8 L12.8 3"/></svg>
<div class="abs" style="left:808px;top:296px;width:32px;height:32px;background:#c4c4c4"></div>
<div class="t" id="shA" style="left:815px;top:299.500px;font-size:26.500px;color:#333">A</div>
<div class="abs" style="left:860px;top:296px;width:32px;height:32px;border-radius:16px;border:2.400px solid #2b2b2b"></div>
<div class="t" id="encJ" style="left:866px;top:301.500px;font-size:20px;color:#2b2b2b">字</div>
<div class="sep" style="left:932px;top:224.5px;height:122.5px"></div>
<!-- paragraph group row1 -->
<svg width="660" height="130" style="left:950px;top:216px" viewBox="950 216 660 130" fill="none" stroke="#2f2f2f" stroke-width="2.300" stroke-linecap="butt" stroke-linejoin="round">
<!-- bullets -->
<g fill="#3a80c6" stroke="none"><rect x="962" y="232" width="6.200" height="6.200"/><rect x="962" y="244" width="6.200" height="6.200"/><rect x="962" y="256" width="6.200" height="6.200"/></g>
<path d="M972 235 H992 M972 247 H992 M972 259 H992"/>
<!-- numbering lines -->
<path d="M1048 235 H1068 M1048 247 H1068 M1048 259 H1068"/>
<!-- multilevel lines -->
<path d="M1124.500 235 H1144 M1130.500 247 H1144 M1136 259 H1144"/>
<!-- decrease indent -->
<path d="M1222 235 H1249.700 M1222 259 H1249.700 M1238 243.400 H1249.700 M1238 251.100 H1249.700"/>
<path d="M1223 247.200 H1234 M1228 242.200 L1223 247.200 L1228 252.200" stroke="#3a80c6" stroke-width="2.200"/>
<!-- increase indent -->
<path d="M1273.700 235 H1301.800 M1273.700 259 H1301.800 M1290.300 243.400 H1301.800 M1290.300 251.100 H1301.800"/>
<path d="M1274 247.200 H1285 M1280 242.200 L1285 247.200 L1280 252.200" stroke="#3a80c6" stroke-width="2.200"/>
<!-- asian layout arrows -->
<path d="M1355 239.100 H1363.500 M1359 235.300 L1355 239.100 L1359 242.900 M1377 239.100 H1385.500 M1381.500 235.300 L1385.500 239.100 L1381.500 242.900" stroke="#3a80c6" stroke-width="2.200"/>
<path d="M1356.500 261 L1370.100 245.300 L1383.700 261 M1361.500 255.700 H1378.700" stroke-width="2.400" stroke-linecap="square"/>
<!-- sort arrow -->
<path d="M1485 232 V262.500 M1478.500 256 L1485 262.800 L1491.500 256" stroke-width="2.300"/>
<!-- show marks -->
<rect x="1534" y="224" width="48" height="48" rx="6.500" fill="#c4c4c4" stroke="none"/>
<path d="M1573.400 232 V243.600 H1557.500 M1563 238 L1557 243.600 L1563 249.200 M1542 255.300 H1558.500 M1553 249.700 L1559 255.300 L1553 260.900" stroke-width="2.300"/>
<!-- row2: align -->
<path d="M964 299.200 H992.100 M964 307 H984 M964 314.900 H992.100 M964 322.900 H984"/>
<path d="M1015.800 299.200 H1043.900 M1019.900 307 H1039.800 M1015.800 314.900 H1043.900 M1019.900 322.900 H1039.800"/>
<path d="M1067.900 299.200 H1095.900 M1076.300 307 H1095.900 M1067.900 314.900 H1095.900 M1076.300 322.900 H1095.900"/>
<rect x="1110" y="288" width="48" height="48" rx="6.500" fill="#c4c4c4" stroke="none"/>
<path d="M1120 299.200 H1148 M1120 307 H1148 M1120 314.900 H1148 M1120 322.900 H1148" stroke-width="2.500"/>
<!-- distributed -->
<path d="M1170.700 296 V328 M1201 296 V328" stroke="#3a80c6" stroke-width="2.200"/>
<path d="M1175 301.400 H1197 M1179 297.600 L1175 301.400 L1179 305.200 M1193 297.600 L1197 301.400 L1193 305.200" stroke="#3a80c6" stroke-width="2.200"/>
<path d="M1174.400 308.800 H1197.900 M1174.400 316.800 H1197.900 M1174.400 324.700 H1197.900"/>
<!-- line spacing -->
<path d="M1257 299.500 V324.800 M1252.800 303.500 L1257 299.300 L1261.200 303.500 M1252.800 320.800 L1257 325 L1261.200 320.800" stroke="#3a80c6" stroke-width="2.200"/>
<path d="M1266.300 299.200 H1283.900 M1266.300 307 H1283.900 M1266.300 314.900 H1283.900 M1266.300 322.900 H1283.900"/>
<!-- bucket -->
<rect x="1358" y="320.200" width="32" height="7.500" fill="#ebebeb" stroke="none"/>
<path d="M1363.500 309.500 L1375.500 297.800 L1384 309 L1372 318.500 Z M1372.500 300.500 V298.500 Q1372.500 296.300 1374.700 296.300 Q1376.800 296.300 1376.800 298.500 V306.500" stroke-width="2.300" fill="none"/>
<path d="M1380.500 304.500 Q1385.500 303.500 1387 308.500 Q1387.500 312 1385.700 316 Q1385.500 309 1380.500 304.500 Z" fill="#2c5fa8" stroke="#2c5fa8" stroke-width="1.200"/>
<!-- borders -->
<path d="M1434 297.500 H1464.100 M1434 309.300 H1464.100 M1434 321.100 H1464.100" stroke="#1f1f1f" stroke-width="2.200" stroke-dasharray="2.200 3.370"/>
<path d="M1435.100 296.400 V322.300 M1449.050 296.400 V322.300 M1463 296.400 V322.300" stroke="#1f1f1f" stroke-width="2.200" stroke-dasharray="2.200 3.700"/>
<path d="M1434 324.900 H1464.500" stroke="#111" stroke-width="2.600"/>
</svg>
<div class="t" style="left:1038.500px;top:229.500px;font-size:11.500px;font-weight:700;color:#3a80c6">1</div>
<div class="t" style="left:1038.500px;top:241.500px;font-size:11.500px;font-weight:700;color:#3a80c6">2</div>
<div class="t" style="left:1038.500px;top:253.500px;font-size:11.500px;font-weight:700;color:#3a80c6">3</div>
<div class="t" style="left:1114px;top:229.500px;font-size:11.500px;font-weight:700;color:#3a80c6">1</div>
<div class="t" style="left:1119px;top:240px;font-size:13px;font-weight:700;color:#3a80c6">a</div>
<div class="t" style="left:1130px;top:252.500px;font-size:12px;font-weight:700;color:#3a80c6">i</div>
<div class="t" id="sortA" style="left:1460px;top:229.500px;font-size:18px;font-weight:700;color:#3a80c6">A</div>
<div class="t" id="sortZ" style="left:1460px;top:247.500px;font-size:18.500px;color:#2f2f2f">Z</div>
<svg width="15.8" height="11" style="left:1006.1px;top:243.5px" viewBox="0 0 15.8 11" fill="none" stroke="#2b2b2b" stroke-width="2.5" stroke-linecap="round" stroke-linejoin="round"><path d="M3 3 L7.9 8 L12.8 3"/></svg>
<svg width="15.8" height="11" style="left:1082.3px;top:243.5px" viewBox="0 0 15.8 11" fill="none" stroke="#2b2b2b" stroke-width="2.5" stroke-linecap="round" stroke-linejoin="round"><path d="M3 3 L7.9 8 L12.8 3"/></svg>
<svg width="15.8" height="11" style="left:1158.1px;top:243.5px" viewBox="0 0 15.8 11" fill="none" stroke="#2b2b2b" stroke-width="2.5" stroke-linecap="round" stroke-linejoin="round"><path d="M3 3 L7.9 8 L12.8 3"/></svg>
<div class="sep" style="left:1194px;top:230.5px;height:35px"></div>
<div class="sep" style="left:1328.2px;top:230.5px;height:35px"></div>
<svg width="15.8" height="11" style="left:1398.3px;top:243.5px" viewBox="0 0 15.8 11" fill="none" stroke="#2b2b2b" stroke-width="2.5" stroke-linecap="round" stroke-linejoin="round"><path d="M3 3 L7.9 8 L12.8 3"/></svg>
<div class="sep" style="left:1433.8px;top:230.5px;height:35px"></div>
<div class="sep" style="left:1516px;top:230.5px;height:35px"></div>
<div class="sep" style="left:1226px;top:294.5px;height:35.2px"></div>
<svg width="15.8" height="11" style="left:1295.9px;top:307px" viewBox="0 0 15.8 11" fill="none" stroke="#2b2b2b" stroke-width="2.5" stroke-linecap="round" stroke-linejoin="round"><path d="M3 3 L7.9 8 L12.8 3"/></svg>
<div class="sep" style="left:1332px;top:294.5px;height:35.2px"></div>
<svg width="15.8" height="11" style="left:1402.1px;top:307.3px" viewBox="0 0 15.8 11" fill="none" stroke="#2b2b2b" stroke-width="2.5" stroke-linecap="round" stroke-linejoin="round"><path d="M3 3 L7.9 8 L12.8 3"/></svg>
<svg width="15.8" height="11" style="left:1478.1px;top:307.3px" viewBox="0 0 15.8 11" fill="none" stroke="#2b2b2b" stroke-width="2.5" stroke-linecap="round" stroke-linejoin="round"><path d="M3 3 L7.9 8 L12.8 3"/></svg>
<div class="sep" style="left:1602.4px;top:224.5px;height:122.5px"></div>
<!-- styles gallery -->
<div class="abs" style="left:1624px;top:216px;width:552px;height:116px;border-radius:9px;background:#fcfcfc;border:1.500px solid #c6c6c6"></div>
<div class="abs" style="left:1660.500px;top:220.500px;width:159px;height:107px;border-radius:10px;background:#dfe5f3;border:2px solid #8aa0d2"></div>
<div class="abs card" style="left:1670px;top:228px;width:140px;height:92px;border-radius:6px;background:linear-gradient(#fff 0,#fff 63px,#f3f3f3 64px,#ebebeb 100%);border:1.500px solid #cdcdcd"></div>
<div class="abs card" style="left:1830px;top:228px;width:140px;height:92px;border-radius:6px;background:linear-gradient(#fff 0,#fff 63px,#f3f3f3 64px,#ebebeb 100%);border:1.500px solid #d6d6d6"></div>
<div class="abs card" style="left:1990.500px;top:228px;width:139.500px;height:92px;border-radius:6px;background:linear-gradient(#fff 0,#fff 63px,#f3f3f3 64px,#ebebeb 100%);border:1.500px solid #d6d6d6"></div>
<div class="t" id="pv1" style="left:1709.500px;top:247px;font-size:20.500px;color:#3c3c3c;font-family:'Noto Serif CJK JP','Noto Serif CJK SC',serif;font-weight:600">あア亜</div>
<div class="t" id="pv2" style="left:1869.500px;top:247px;font-size:20.500px;color:#3c3c3c;font-family:'Noto Serif CJK JP','Noto Serif CJK SC',serif;font-weight:600">あア亜</div>
<div class="abs" style="left:1992px;top:230px;width:132.500px;height:60px;overflow:hidden"><div class="t" id="pv3" style="left:5px;top:10.500px;font-size:32px;color:#222;font-weight:500;letter-spacing:0">1. <span style="margin-left:10px">あア亜</span></div></div>
<div class="t" id="sl1" style="left:1723px;top:297px;font-size:16.800px;font-weight:500;color:#111">標準</div>
<div class="t" id="sl2" style="left:1867px;top:296px;font-size:16.500px;font-weight:500;color:#111">行間詰め</div>
<div class="t" id="sl3" style="left:2028.500px;top:296px;font-size:16.500px;font-weight:500;color:#111">見出し 1</div>
<svg width="16" height="18" style="left:2151px;top:265px" viewBox="0 0 16 18" fill="none" stroke="#333" stroke-width="2.400" stroke-linecap="round" stroke-linejoin="round"><path d="M4.500 4 L11 9 L4.500 14"/></svg>
<!-- styles window -->
<svg width="70" height="66" style="left:2198px;top:220px" viewBox="2198 220 70 66" fill="none" stroke-linejoin="round" stroke-linecap="round">
<path d="M2216 279 H2208.500 Q2205.500 279 2205.500 276 V228.500 Q2205.500 225.500 2208.500 225.500 H2255.500 Q2258.500 225.500 2258.500 228.500 V245 M2258.500 263 V276 Q2258.500 279 2255.500 279 H2243" stroke="#333" stroke-width="2.200" fill="none"/>
<rect x="2207" y="227" width="50" height="50.500" fill="#fafafa" stroke="none"/>
<path d="M2239.500 269 L2258.500 247.500 Q2261.500 244 2263 245 Q2264 246.500 2262 250 L2243.500 272.500 Z" fill="#f7f7f7" stroke="#333" stroke-width="2.300"/>
<path d="M2243.500 272.500 Q2240 282 2221.500 279.500 Q2229.500 277 2230.500 271.500 Q2233 266.500 2239.500 269 Z" fill="#7fb0e6" stroke="#3a78c4" stroke-width="2"/>
</svg>
<div class="lbl" id="lbl_sw1" style="left:2194px;top:295.500px;font-weight:500;color:#111">スタイル</div>
<div class="lbl" id="lbl_sw2" style="left:2186px;top:318.700px;font-weight:500;color:#111">ウィンドウ</div>
<div class="sep" style="left:2305.8px;top:224.5px;height:123px"></div>
<!-- mic -->
<svg width="50" height="70" style="left:2384px;top:216px" viewBox="2384 216 50 70" fill="none" stroke-linecap="round">
<rect x="2397.400" y="222.200" width="23" height="42.300" rx="11.500" fill="#8db9ea" stroke="#2c5fa8" stroke-width="2.400"/>
<path d="M2391 253.500 Q2391 271.300 2408.900 271.300 Q2426.800 271.300 2426.800 253.500 M2408.900 271.500 V281.300" stroke="#333" stroke-width="2.400"/>
</svg>
<div class="lbl" id="lbl_dict" style="left:2332px;top:295px;letter-spacing:.3px;font-weight:500;color:#111">ディクテーション</div>
<div class="sep" style="left:2511.8px;top:224.5px;height:123px"></div>
<!-- sensitivity -->
<svg width="90" height="70" style="left:2540px;top:216px" viewBox="2540 216 90 70" fill="none" stroke="#a9c6e6" stroke-width="2.200" stroke-linejoin="miter">
<path d="M2569 225.500 H2548 V278 H2587.500 V255"/>
<g transform="rotate(-40 2575 243)"><rect x="2556.500" y="237" width="21" height="11.500" fill="#f5f5f5"/><rect x="2559.500" y="240.500" width="15" height="4.500" fill="#dbe7f5" stroke-width="1.600"/><rect x="2580" y="230.500" width="12.500" height="24" fill="#f5f5f5"/><rect x="2580" y="230.500" width="4" height="24" fill="#a9c6e6" stroke="none"/><rect x="2592.500" y="236" width="7.500" height="13" fill="#f5f5f5"/></g>
</svg>
<svg width="17" height="11.5" style="left:2608.5px;top:247.05px" viewBox="0 0 17 11.5" fill="none" stroke="#ababab" stroke-width="2.800" stroke-linecap="round" stroke-linejoin="round"><path d="M3 3 L8.5 8.5 L14 3"/></svg>
<div class="lbl" id="lbl_sens" style="left:2552px;top:295px;font-weight:500;color:#9a9a9a">秘密度</div>
<div class="sep" style="left:2650px;top:224.5px;height:123.3px"></div>
<!-- add-ins -->
<svg width="64" height="64" style="left:2675px;top:220px" viewBox="2675 220 64 64" fill="#fbf3ef" stroke="#cf5f38">
<rect x="2679.200" y="224.400" width="55.700" height="55.300" stroke-width="2.200" fill="#fbeee8"/>
<rect x="2684" y="229.200" width="20.600" height="20.600" stroke-width="1.700"/><rect x="2709.800" y="229.200" width="20.600" height="20.600" stroke-width="1.700"/>
<rect x="2684" y="254.800" width="20.600" height="20.600" stroke-width="1.700"/><rect x="2709.800" y="254.800" width="20.600" height="20.600" stroke-width="1.700"/>
</svg>
<div class="lbl" id="lbl_add1" style="left:2688.500px;top:294.500px;font-weight:500;color:#111">アド</div>
<div class="lbl" id="lbl_add2" style="left:2688.500px;top:318.700px;font-weight:500;color:#111">イン</div>
<div class="sep" style="left:2764px;top:224.5px;height:123.3px"></div>
<!-- editor -->
<svg width="76" height="70" style="left:2800px;top:216px" viewBox="2800 216 76 70" stroke-linejoin="round" stroke-linecap="round">
<g fill="#2d58b8" stroke="none"><path d="M2838 238 H2862.300 A4.700 4.700 0 0 1 2862.300 247.400 H2832 Z"/><path d="M2828.500 252.100 H2851.800 A4.700 4.700 0 0 1 2851.800 261.500 H2822 Z"/><path d="M2818.500 266.200 H2842.300 A4.700 4.700 0 0 1 2842.300 275.600 H2812 Z"/></g>
<path d="M2843 222.500 L2852.500 229.500 L2820 272.500 L2808.500 280.500 L2811.500 266 Z" fill="#f5f5f5" stroke="#2d58b8" stroke-width="2.400"/>
<path d="M2843 222.500 L2852.500 229.500 L2849 234 L2839.500 227 Z" fill="#2d58b8" stroke="#2d58b8" stroke-width="2.400"/>
<path d="M2808.500 280.500 L2810 274.500 L2814 277 Z" fill="#2d58b8" stroke="#2d58b8" stroke-width="2"/>
</svg>
<div class="lbl" id="lbl_editor" style="left:2790.500px;top:295px;font-weight:500;color:#111">エディター</div>
<!-- rulers -->
<div class="abs" style="left:0;top:356px;width:3024px;height:31px;background:#fdfdfd;border-bottom:1.5px solid #d8d8d8"></div>
<div class="abs" style="left:0;top:387px;width:3024px;height:13px;background:#f5f5f5"></div>
<div class="abs" style="left:768.600px;top:356px;width:212.600px;height:30px;background:#dedede;border-left:1.500px solid #cfcfcf"></div>
<div class="abs" style="left:2044.600px;top:356px;width:213px;height:30px;background:#dedede;border-right:1.500px solid #cfcfcf"></div>
<div class="abs" style="left:0;top:356px;width:31px;height:31px;background:#fdfdfd;border-right:1.500px solid #d8d8d8"></div>
<svg width="20" height="24" style="left:5px;top:359px" viewBox="0 0 20 24" fill="none" stroke="#6b6b6b" stroke-width="2.200"><path d="M5 21 V8 H12"/><path d="M11.500 2.500 L17 8 L11.500 13.500 Z" fill="#6b6b6b" stroke="none"/></svg>
<svg width="3024" height="44" style="left:0;top:356px;overflow:hidden" viewBox="0 356 3024 44" fill="none">
<path d="M786.3 378.500V386M804.0 378.500V386M821.7 378.500V386M839.5 378.500V386M857.2 378.500V386M874.9 378.500V386M892.6 378.500V386M928.0 378.500V386M945.8 378.500V386M963.5 378.500V386M998.9 378.500V386M1016.6 378.500V386M1034.4 378.500V386M1069.8 378.500V386M1087.5 378.500V386M1105.2 378.500V386M1122.9 378.500V386M1140.7 378.500V386M1158.4 378.500V386M1176.1 378.500V386M1211.5 378.500V386M1229.2 378.500V386M1247.0 378.500V386M1264.7 378.500V386M1282.4 378.500V386M1300.1 378.500V386M1317.8 378.500V386M1353.3 378.500V386M1371.0 378.500V386M1388.7 378.500V386M1406.4 378.500V386M1424.1 378.500V386M1441.8 378.500V386M1459.6 378.500V386M1495.0 378.500V386M1512.7 378.500V386M1530.4 378.500V386M1548.1 378.500V386M1565.9 378.500V386M1583.6 378.500V386M1601.3 378.500V386M1636.7 378.500V386M1654.4 378.500V386M1672.2 378.500V386M1689.9 378.500V386M1707.6 378.500V386M1725.3 378.500V386M1743.0 378.500V386M1778.5 378.500V386M1796.2 378.500V386M1813.9 378.500V386M1831.6 378.500V386M1849.3 378.500V386M1867.0 378.500V386M1884.8 378.500V386M1920.2 378.500V386M1937.9 378.500V386M1955.6 378.500V386M1973.4 378.500V386M1991.1 378.500V386M2008.8 378.500V386M2026.5 378.500V386M2061.9 378.500V386M2079.7 378.500V386M2097.4 378.500V386M2115.1 378.500V386M2132.8 378.500V386M2150.5 378.500V386M2168.2 378.500V386M2203.7 378.500V386M2221.4 378.500V386M2239.1 378.500V386M910.3 368V386M1052.1 368V386M1193.8 368V386M1335.5 368V386M1477.3 368V386M1619.0 368V386M1760.7 368V386M1902.5 368V386M2186.0 368V386" stroke="#b9b9b9" stroke-width="1.700"/>
<path d="M1086.2 388V393.800M1191.2 388V393.800M1296.2 388V393.800M1401.2 388V393.800M1506.2 388V393.800M1611.2 388V393.800M1716.2 388V393.800M1821.2 388V393.800M1926.2 388V393.800M2031.2 388V393.800" stroke="#9b9b9b" stroke-width="2"/>
<g fill="#fdfdfd" stroke="#a8a8a8" stroke-width="1.500" stroke-linejoin="round">
<path d="M997.500 352 H1017 V357.500 L1007.200 366 L997.500 357.500 Z"/>
<path d="M971.500 385.200 V379.500 L981.200 371.800 L991 379.500 V385.200 Z"/>
<rect x="971.500" y="386.800" width="19.500" height="10.800" rx="3"/>
<path d="M2035.200 385.200 V379.500 L2044.900 371.800 L2054.600 379.500 V385.200 Z"/>
</g>
</svg>
<div class="t rl" style="left:809.5px;top:356.500px;width:60px;text-align:center">20</div>
<div class="t rl" style="left:1092.9px;top:356.500px;width:60px;text-align:center">20</div>
<div class="t rl" style="left:1234.7px;top:356.500px;width:60px;text-align:center">40</div>
<div class="t rl" style="left:1376.4px;top:356.500px;width:60px;text-align:center">60</div>
<div class="t rl" style="left:1518.1px;top:356.500px;width:60px;text-align:center">80</div>
<div class="t rl" style="left:1659.9px;top:356.500px;width:60px;text-align:center">100</div>
<div class="t rl" style="left:1801.6px;top:356.500px;width:60px;text-align:center">120</div>
<div class="t rl" style="left:1943.4px;top:356.500px;width:60px;text-align:center">140</div>
<div class="t rl" style="left:2085.1px;top:356.500px;width:60px;text-align:center">160</div>
<div class="abs" style="left:0;top:387.500px;width:31px;height:1531px;background:#fdfdfd;border-right:1.500px solid #d3d3d3"></div>
<div class="abs" style="left:31px;top:400px;width:13px;height:1518px;background:#f5f5f5"></div>
<div class="abs" style="left:0;top:1530.300px;width:30px;height:213px;background:#dcdcdc;border-top:1.500px solid #c6c6c6;border-bottom:1.500px solid #c6c6c6"></div>
<svg width="31" height="1531" style="left:0;top:387px" viewBox="0 387 31 1531" fill="none">
<path d="M22 419.5H30M22 437.2H30M22 454.9H30M22 472.6H30M22 490.3H30M22 508.1H30M22 543.5H30M22 561.2H30M22 578.9H30M22 596.6H30M22 614.4H30M22 632.1H30M22 649.8H30M22 685.2H30M22 702.9H30M22 720.7H30M22 738.4H30M22 756.1H30M22 773.8H30M22 791.5H30M22 827.0H30M22 844.7H30M22 862.4H30M22 880.1H30M22 897.8H30M22 915.5H30M22 933.3H30M22 968.7H30M22 986.4H30M22 1004.1H30M22 1021.8H30M22 1039.6H30M22 1057.3H30M22 1075.0H30M22 1110.4H30M22 1128.1H30M22 1145.9H30M22 1163.6H30M22 1181.3H30M22 1199.0H30M22 1216.7H30M22 1252.2H30M22 1269.9H30M22 1287.6H30M22 1305.3H30M22 1323.0H30M22 1340.8H30M22 1358.5H30M22 1393.9H30M22 1411.6H30M22 1429.3H30M22 1447.1H30M22 1464.8H30M22 1482.5H30M22 1500.2H30M22 1535.6H30M22 1553.4H30M22 1571.1H30M22 1588.8H30M22 1606.5H30M22 1624.2H30M22 1641.9H30M22 1677.4H30M22 1695.1H30M22 1712.8H30M22 1730.5H30M12 525.8H30M12 667.5H30M12 809.2H30M12 951.0H30M12 1092.7H30M12 1234.4H30M12 1376.2H30M12 1517.9H30M12 1659.7H30" stroke="#b9b9b9" stroke-width="1.700"/>
</svg>
<div class="abs" style="left:0;top:387px;width:30px;height:1356.300px;overflow:hidden">
<div class="t rl" style="left:-20.5px;top:58.9px;width:60px;height:18px;text-align:center;transform:rotate(-90deg)">80</div>
<div class="t rl" style="left:-20.5px;top:200.6px;width:60px;height:18px;text-align:center;transform:rotate(-90deg)">100</div>
<div class="t rl" style="left:-20.5px;top:342.4px;width:60px;height:18px;text-align:center;transform:rotate(-90deg)">120</div>
<div class="t rl" style="left:-20.5px;top:484.1px;width:60px;height:18px;text-align:center;transform:rotate(-90deg)">140</div>
<div class="t rl" style="left:-20.5px;top:625.8px;width:60px;height:18px;text-align:center;transform:rotate(-90deg)">160</div>
<div class="t rl" style="left:-20.5px;top:767.6px;width:60px;height:18px;text-align:center;transform:rotate(-90deg)">180</div>
<div class="t rl" style="left:-20.5px;top:909.3px;width:60px;height:18px;text-align:center;transform:rotate(-90deg)">200</div>
<div class="t rl" style="left:-20.5px;top:1051.1px;width:60px;height:18px;text-align:center;transform:rotate(-90deg)">220</div>
<div class="t rl" style="left:-20.5px;top:1192.8px;width:60px;height:18px;text-align:center;transform:rotate(-90deg)">240</div>
<div class="t rl" style="left:-20.5px;top:1334.5px;width:60px;height:18px;text-align:center;transform:rotate(-90deg)">260</div>
</div>
<!-- status bar -->
<div class="abs" id="status"></div>
<div class="st" id="st_page" style="left:50px"><span style="letter-spacing:1.500px">3/4 </span>ページ</div>
<div class="st" id="st_words" style="left:200px"><span style="letter-spacing:.7px">1619 </span>単語</div>
<svg width="36" height="32" style="left:340px;top:1925px" viewBox="340 1925 36 32" fill="none" stroke="#666" stroke-width="2.100" stroke-linecap="round" stroke-linejoin="round">
<path d="M355 1932 Q352 1929.500 343 1929.500 V1948.500 Q352 1948.500 355 1951.500 Q358 1948.500 365.500 1948.500 M355 1932 V1951.500 M355 1932 Q357.500 1929.500 364 1929.500"/>
<path d="M362.500 1935.500 L371.500 1944.500 M371.500 1935.500 L362.500 1944.500"/>
</svg>
<div class="st" id="st_lang" style="left:410px">日本語</div>
<svg width="36" height="32" style="left:515px;top:1924px" viewBox="515 1924 36 32" fill="none" stroke="#666" stroke-width="2.400" stroke-linejoin="round">
<circle cx="523" cy="1931.500" r="4.800" fill="#666" stroke="none"/>
<path d="M527 1931 H543.500 Q547 1931 547 1934.500 M541.500 1931 V1949 Q541.500 1953 537.500 1953 H522 Q518.500 1953 518.500 1949.500 H535.500 M526 1937 V1948.500"/>
<path d="M518.500 1949.500 H536 V1953 H522 Q518.500 1953 518.500 1949.500 Z" fill="#666"/>
</svg>
<svg width="36" height="34" style="left:580px;top:1924px" viewBox="580 1924 36 34" fill="none" stroke="#666" stroke-width="2.100" stroke-linecap="round" stroke-linejoin="round">
<circle cx="594.500" cy="1930.500" r="3.300"/>
<path d="M583.500 1934 Q582.500 1931 585.500 1931.500 L591.500 1936 H598 L604.500 1931.500 Q607 1931.500 606.500 1934 L599.500 1940 V1944 M590 1940 L590 1944 Q590.500 1948 587.500 1951.500 Q586 1954.500 589 1954.500 Q591.500 1954 593 1949 Q594.500 1945.500 596 1949"/>
<path d="M597.500 1942.500 L611 1955 M611 1942.500 L597.500 1955"/>
</svg>
<div class="st" id="st_acc" style="left:623px;letter-spacing:.25px">アクセシビリティ: 検討が必要です</div>
<!-- right side -->
<svg width="36" height="28" style="left:2129px;top:1927px" viewBox="2129 1927 36 28" fill="none" stroke="#555" stroke-width="2.200" stroke-linejoin="round"><rect x="2132" y="1930.500" width="29.500" height="21" rx="2"/><path d="M2137 1938.500 V1935.500 H2140.500 M2153 1935.500 H2156.500 V1938.500 M2156.500 1943.500 V1946.500 H2153 M2140.500 1946.500 H2137 V1943.500" stroke-width="1.800"/></svg>
<div class="st" id="st_focus" style="left:2178.500px">フォーカス</div>
<div class="abs" style="left:2310.500px;top:1920px;width:73.500px;height:44px;background:#adadad"></div>
<svg width="36" height="36" style="left:2329px;top:1923px" viewBox="2329 1923 36 36" fill="none" stroke="#fff" stroke-width="1.800"><rect x="2333.500" y="1928" width="27" height="28.500" fill="#adadad" stroke-width="2"/><path d="M2337.500 1933H2356.500M2337.500 1936.700H2356.500M2337.500 1940.400H2356.500M2337.500 1944.100H2356.500M2337.500 1947.800H2356.500M2337.500 1951.500H2356.500"/></svg>
<svg width="40" height="36" style="left:2399px;top:1923px" viewBox="2399 1923 40 36" fill="none" stroke="#5c5c5c" stroke-width="2"><path d="M2418 1953 H2404 V1929 H2426 V1939"/><path d="M2408 1934H2422M2408 1938.500H2422M2408 1943H2417M2408 1947.500H2415" stroke-width="1.700"/><circle cx="2426" cy="1948" r="8.500" fill="#5c5c5c" stroke="#e0e0e0" stroke-width="1.300"/><path d="M2421 1945 Q2424 1947 2425.500 1945 Q2428 1944 2427 1947.500 Q2425.500 1950 2428.500 1952" stroke="#e0e0e0" stroke-width="1.600"/></svg>
<svg width="40" height="36" style="left:2472px;top:1923px" viewBox="2472 1923 40 36" fill="none" stroke="#5c5c5c" stroke-width="2.200"><path d="M2476 1930.500H2496M2487 1937.500H2507M2487 1944.500H2507M2487 1951.500H2507"/><path d="M2480 1937.500H2484M2480 1944.500H2484M2480 1951.500H2484" stroke-dasharray="2 1"/></svg>
<svg width="40" height="36" style="left:2543px;top:1923px" viewBox="2543 1923 40 36" fill="none" stroke="#5c5c5c" stroke-width="2.200"><path d="M2547.500 1930.500H2576.500M2547.500 1937.500H2570M2547.500 1944.500H2576.500M2547.500 1951.500H2570"/></svg>
<div class="abs" style="left:2613px;top:1940px;width:17px;height:3.500px;background:#555"></div>
<div class="abs" style="left:2644px;top:1937.500px;width:199px;height:8.500px;border-radius:4.250px;background:#a3a3a3"></div>
<div class="abs" style="left:2732px;top:1927px;width:36px;height:28px;border-radius:14px;background:#fff;box-shadow:0 1px 2px rgba(0,0,0,.25)"></div>
<div class="abs" style="left:2857.500px;top:1940px;width:16.500px;height:3.500px;background:#555"></div>
<div class="abs" style="left:2864px;top:1933.500px;width:3.500px;height:16.500px;background:#555"></div>
<div class="st" id="st_zoom" style="left:2910.500px;letter-spacing:1.300px">125%</div>
</body>
</html>
